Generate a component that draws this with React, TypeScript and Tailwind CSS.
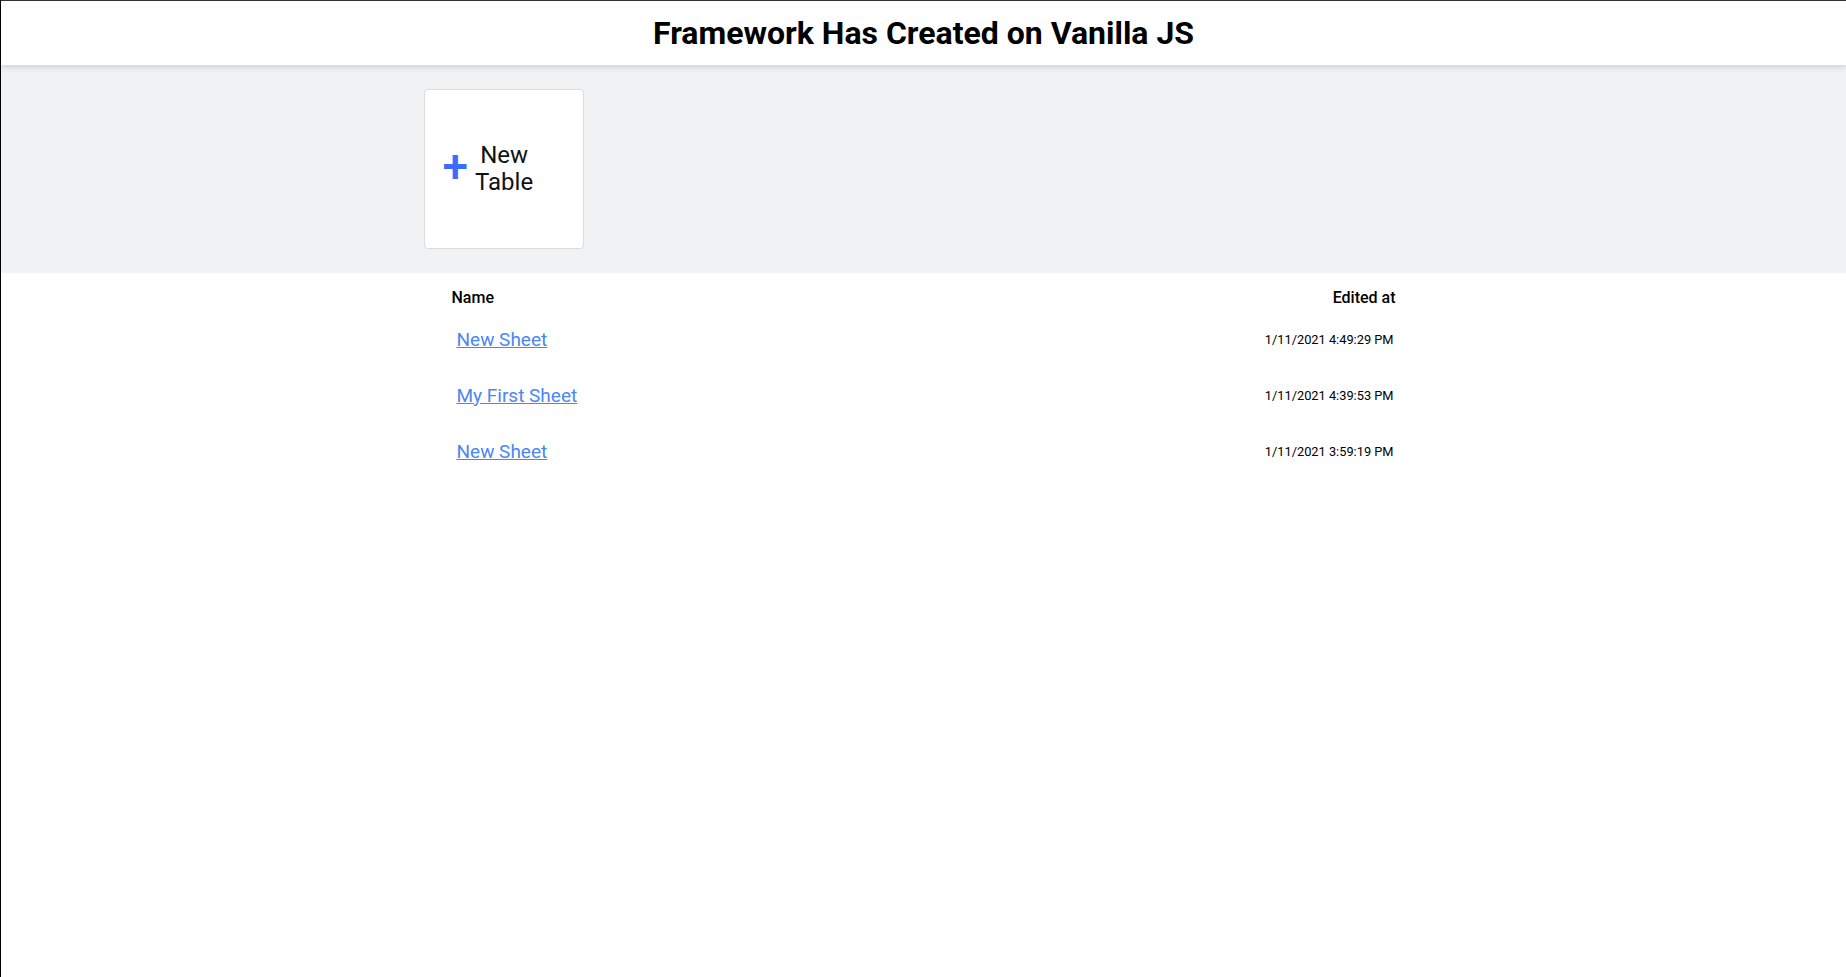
const sheets = [
  { name: 'New Sheet', date: '1/11/2021 4:49:29 PM' },
  { name: 'My First Sheet', date: '1/11/2021 4:39:53 PM' },
  { name: 'New Sheet', date: '1/11/2021 3:59:19 PM' },
];

export default function App() {
  return (
    <div className="min-h-[977px] bg-white border-t border-l border-t-[#333] border-l-black font-['Roboto',sans-serif] text-black">
      <header className="relative z-10 h-[64px] flex items-center justify-center bg-white shadow-[0_2px_6px_rgba(0,0,0,0.15)]">
        <h1 className="text-[32px] font-bold">Framework Has Created on Vanilla JS</h1>
      </header>

      <section className="bg-[#f1f2f4] pt-[24px] pb-[24px]">
        <div className="w-[1000px] mx-auto">
          <div className="w-[160px] h-[160px] bg-white border border-[#dadce0] rounded-[4px] flex items-center pl-[18px] gap-[7px] cursor-pointer">
            <span className="text-[#3d6bff] text-[46px] font-medium leading-none -mt-[7px]">+</span>
            <span className="text-[24px] leading-[27px] text-center text-[#111]">
              New
              <br />
              Table
            </span>
          </div>
        </div>
      </section>

      <main className="w-[1000px] mx-auto px-[28px] pt-[13px]">
        <div className="flex justify-between items-center h-[24px] text-[16px] font-medium">
          <span>Name</span>
          <span>Edited at</span>
        </div>
        <ul className="mt-[2px]">
          {sheets.map((s, i) => (
            <li key={i} className="flex justify-between items-center h-[56px]">
              <a href="#" className="ml-[5px] text-[19px] text-[#4a86f7] underline">
                {s.name}
              </a>
              <span className="text-[12.8px] mr-[2px]">{s.date}</span>
            </li>
          ))}
        </ul>
      </main>
    </div>
  );
}
